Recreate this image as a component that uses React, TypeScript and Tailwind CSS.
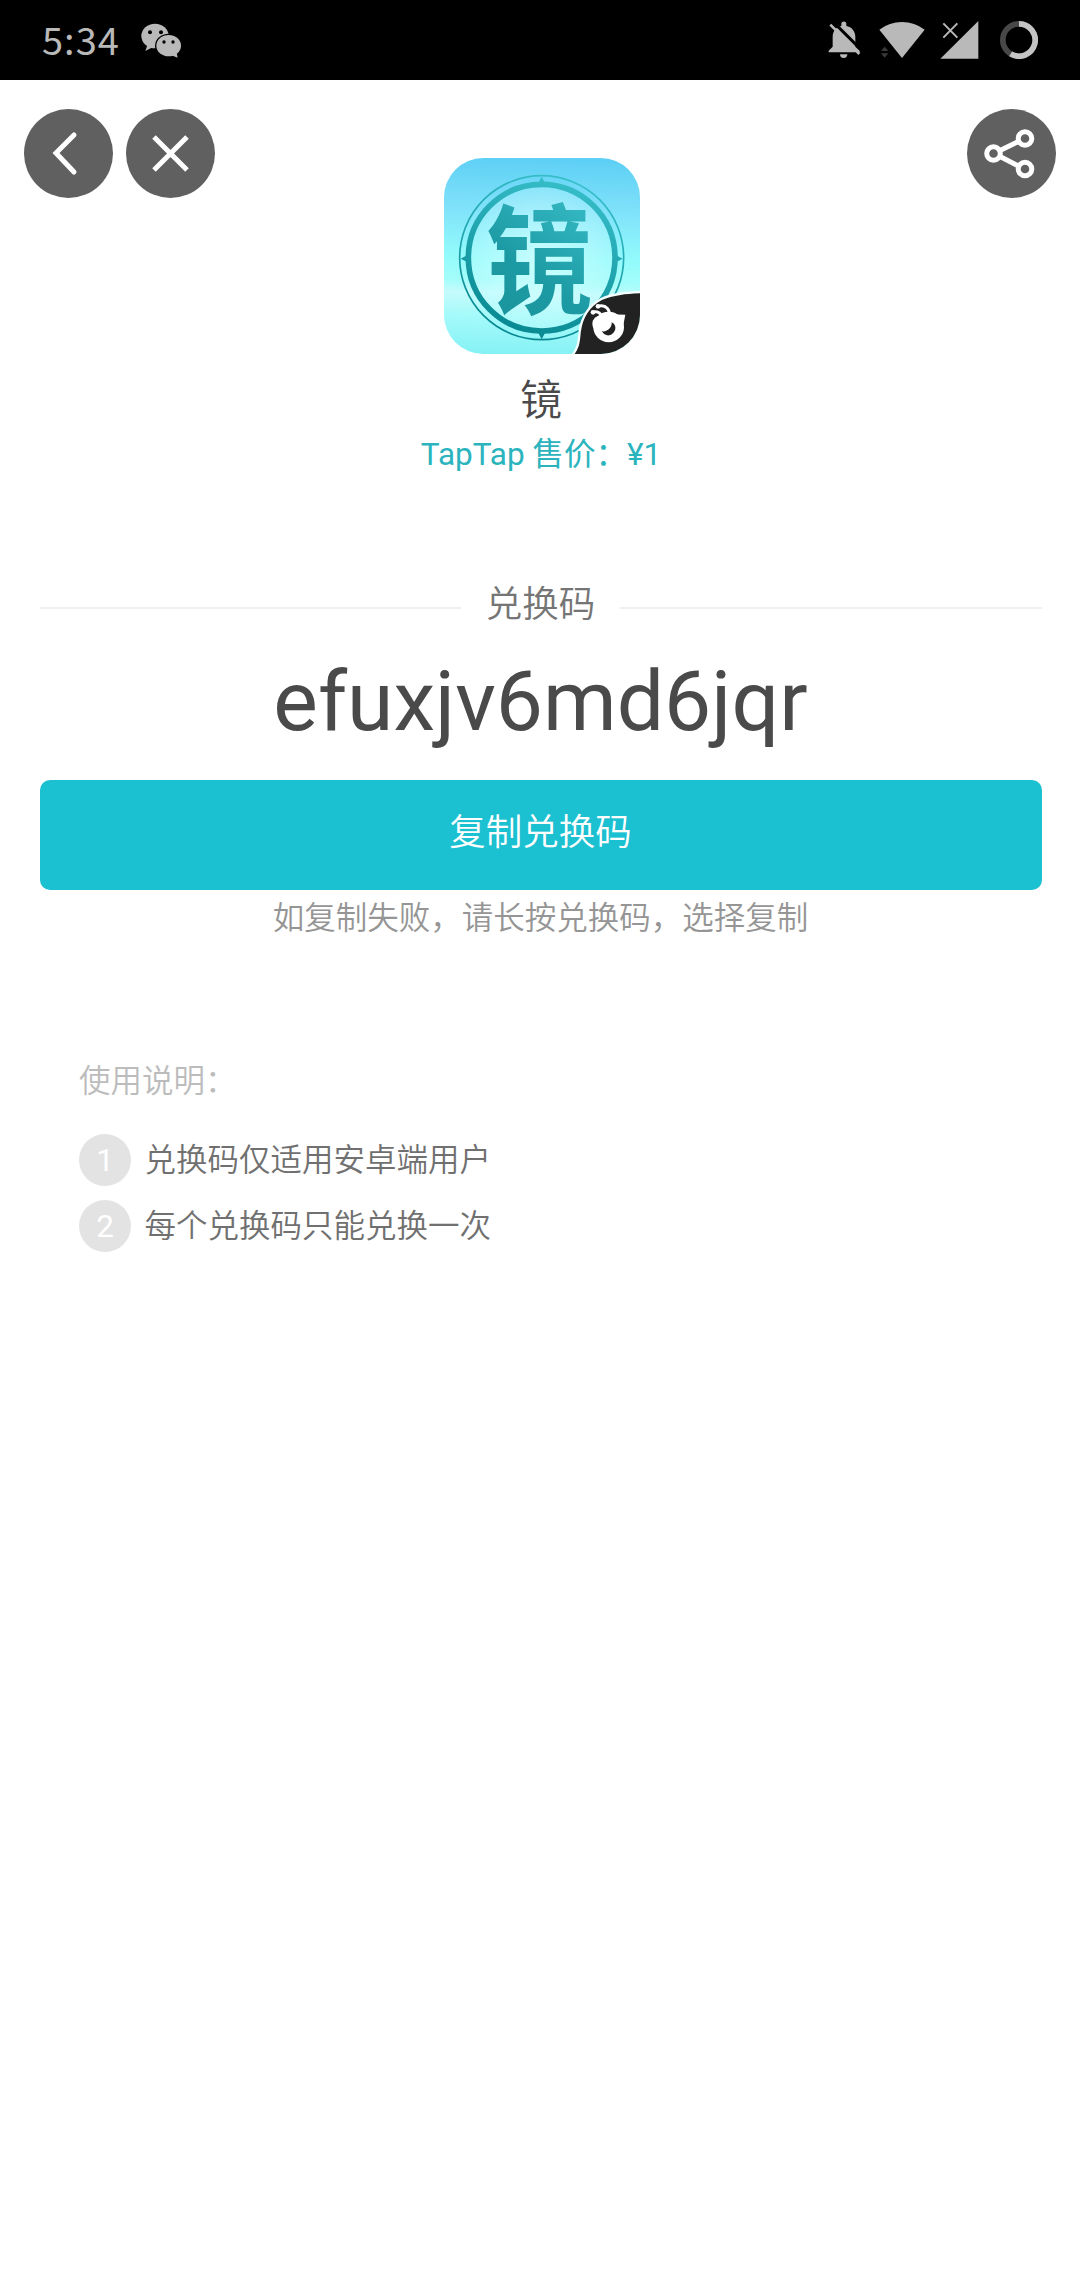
import React from 'react';

const instructions = [
    '兑换码仅适用安卓端用户',
    '每个兑换码只能兑换一次',
];

const WeChatIcon = () => (
    <svg className="w-[40px] h-[35px]" viewBox="423 67 120 105" fill="#b9b9b9">
        <path d="M442 134 L436 151 L458 140 Z" />
        <ellipse cx="465" cy="106" rx="41" ry="37" />
        <ellipse cx="506" cy="135" rx="41" ry="36" fill="#000" />
        <ellipse cx="506" cy="135" rx="37" ry="32" />
        <path d="M514 164 L533 171 L529 152 Z" />
        <g fill="#000">
            <circle cx="450" cy="95" r="6" />
            <circle cx="483" cy="95" r="6" />
            <circle cx="492" cy="124" r="5" />
            <circle cx="519" cy="124" r="5" />
        </g>
    </svg>
);

const BellOffIcon = () => (
    <svg className="w-[33px] h-[38px]" viewBox="83 64 99 114" fill="#b9b9b9">
        <path d="M85 158 V153 L97 141 V112 C97 94 107 82 123 79 V73 A7.5 7.5 0 0 1 138 73 V79 C154 82 165 94 165 112 V141 L178 153 V158 Z" />
        <path d="M119 164 H141 A11 11 0 0 1 119 164 Z" />
        <path d="M98 66 L192 160" stroke="#000" strokeWidth="9" />
        <path d="M90 75 L177 163" stroke="#b9b9b9" strokeWidth="8" />
    </svg>
);

const WifiIcon = () => (
    <svg className="w-[46px] h-[38px]" viewBox="239 63 138 114" fill="#b9b9b9">
        <path d="M240 89 Q270 66 308 66 Q346 66 376 89 L308 174 Z" />
        <path d="M245 153 L256 140 L267 153 Z M245 160 H267 L256 173 Z" fill="#3a3a3a" />
    </svg>
);

const SignalIcon = () => (
    <svg className="w-[39px] h-[38px]" viewBox="421 63 117 114">
        <path d="M536 63 V176 H422 Z" fill="#b9b9b9" />
        <path d="M431 70 L473 113 M473 70 L431 113" stroke="#b9b9b9" strokeWidth="6" />
    </svg>
);

const BatteryIcon = () => (
    <svg className="w-[38px] h-[38px]" viewBox="600 63 114 114" fill="none" strokeWidth="17">
        <circle cx="657" cy="120" r="48.5" stroke="#484848" />
        <path d="M657 71.5 A48.5 48.5 0 1 1 632 161.5" stroke="#c4c4c4" />
    </svg>
);

const GameLogo = () => (
    <svg className="ml-1 mt-[49px] w-[196px] h-[196px] shrink-0" viewBox="43 39 588 588">
        <defs>
            <linearGradient id="sky" x1="0.03" y1="0" x2="0" y2="1">
                <stop offset="0" stopColor="#5fd0f5" />
                <stop offset="0.25" stopColor="#80e2fa" />
                <stop offset="0.5" stopColor="#93fbfb" />
                <stop offset="0.62" stopColor="#a4fdfa" />
                <stop offset="0.68" stopColor="#c6fbfc" />
                <stop offset="0.8" stopColor="#a5fafa" />
                <stop offset="1" stopColor="#84f1f5" />
            </linearGradient>
            <linearGradient id="ink" gradientUnits="userSpaceOnUse" x1="430" y1="100" x2="270" y2="580">
                <stop offset="0" stopColor="#37bfca" />
                <stop offset="1" stopColor="#078891" />
            </linearGradient>
            <linearGradient id="glyph" x1="0.7" y1="0.1" x2="0.3" y2="1">
                <stop offset="0" stopColor="#35b9c4" />
                <stop offset="0.6" stopColor="#1c9aa3" />
                <stop offset="1" stopColor="#1a949c" />
            </linearGradient>
            <radialGradient id="shine">
                <stop offset="0" stopColor="#dcffff" stopOpacity="0.75" />
                <stop offset="1" stopColor="#c9fdff" stopOpacity="0.3" />
            </radialGradient>
            <clipPath id="tile">
                <rect x="43" y="39" width="588" height="588" rx="118" />
            </clipPath>
        </defs>
        <g clipPath="url(#tile)">
            <rect x="43" y="39" width="588" height="588" fill="url(#sky)" />
            <circle cx="336" cy="338" r="212" fill="url(#shine)" />
            <g fill="none" stroke="url(#ink)">
                <circle cx="336" cy="338" r="246" strokeWidth="5" />
                <circle cx="336" cy="338" r="220" strokeWidth="17" />
            </g>
            <path d="M336 95 L346 114 H326 Z M336 583 L346 564 H326 Z M93 341 L112 331 V351 Z M579 341 L560 331 V351 Z" fill="url(#ink)" />
            <text
                x="0"
                y="0"
                transform="translate(329 480) scale(1 1.13)"
                textAnchor="middle"
                fontSize="318"
                fill="url(#glyph)"
                className="font-['Noto_Sans_CJK_SC',sans-serif] font-bold"
            >
                镜
            </text>
            <path d="M424 636 C448 606 447 590 450 560 C456 515 478 482 515 462 C550 446 590 443 645 441 V645 H424 Z" fill="#222" stroke="#f5ffff" strokeWidth="7" />
            {/* bee mascot */}
            <circle cx="537" cy="546" r="46" fill="#fff" />
            <path d="M540 508 L587 509 L580 545 Z" fill="#fff" />
            <circle cx="514" cy="537" r="26" fill="#fff" />
            <path d="M517 559 C532 562 548 547 546 532 C565 541 558 567 539 571 C529 572 521 568 517 559 Z" fill="#222" />
            <path d="M517 525 C517 506 506 497 490 502 M537 521 C545 493 528 478 505 484" fill="none" stroke="#fff" strokeWidth="9" strokeLinecap="round" />
            <circle cx="490" cy="502" r="7" fill="#fff" />
            <circle cx="505" cy="484" r="7" fill="#fff" />
        </g>
    </svg>
);

const RoundButton: React.FC<{ label: string; children: React.ReactNode }> = ({ label, children }) => (
    <button aria-label={label} className="w-[89px] h-[89px] rounded-full bg-[#606060] shrink-0">
        <svg className="w-[89px] h-[89px]" viewBox="0 0 89 89" fill="none" stroke="#fff" strokeWidth="5">
            {children}
        </svg>
    </button>
);

const App: React.FC = () => {
    return (
        <main className="w-[1080px] h-[2280px] bg-white font-[Roboto,'Noto_Sans_CJK_SC',sans-serif] text-[31.5px] overflow-hidden">
            <div className="flex items-center justify-between h-20 bg-black px-[42px]">
                <div className="flex items-center gap-[21px]">
                    <span className="pb-[3px] font-['Noto_Sans_CJK_SC',sans-serif] text-[38px] leading-[40px] tracking-[1px] text-[#b9b9b9]">5:34</span>
                    <WeChatIcon />
                </div>
                <div className="flex items-center">
                    <BellOffIcon />
                    <div className="ml-[18px] mr-[15px]"><WifiIcon /></div>
                    <SignalIcon />
                    <div className="ml-[21px]"><BatteryIcon /></div>
                </div>
            </div>

            <header className="flex items-start px-6 pt-[29px]">
                <div className="flex flex-1 gap-[13px]">
                    <RoundButton label="返回">
                        <path d="M50 26 L32 44 L50 63" strokeLinecap="round" />
                    </RoundButton>
                    <RoundButton label="关闭">
                        <path d="M28 28 L61 61 M61 28 L28 61" />
                    </RoundButton>
                </div>
                <GameLogo />
                <div className="flex flex-1 justify-end">
                    <RoundButton label="分享">
                        <circle cx="26.5" cy="44.5" r="6.8" />
                        <circle cx="58" cy="29.5" r="6.8" />
                        <circle cx="58" cy="60" r="6.8" />
                        <path d="M33 41.5 L51.5 32.5 M33 47.5 L51.5 57" />
                    </RoundButton>
                </div>
            </header>

            <section className="pl-0.5 text-center">
                <h1 className="mt-5 text-[42px] leading-[54px] font-[350] text-[#4a4a4a]">镜</h1>
                <p className="mt-[3px] leading-[48px] text-[#2bb4bd]">TapTap 售价：¥1</p>
            </section>

            <section className="mt-[102px] pl-[39.5px] pr-[38.5px] text-center">
                <div className="flex items-center gap-[25px]">
                    <div className="mt-[5px] h-[2px] flex-1 bg-[#efefef]" />
                    <h2 className="text-[36.5px] leading-[48px] font-[350] text-[#757575]">兑换码</h2>
                    <div className="mt-[5px] h-[2px] flex-1 bg-[#efefef]" />
                </div>
                <p className="mt-[18px] text-[84px] leading-[110px] text-[#4a4a4a]">efuxjv6md6jqr</p>
                <button className="mt-[23px] block w-full h-[110px] rounded-[10px] bg-[#1bc0d1] pb-1 text-[36.5px] font-[350] text-white">复制兑换码</button>
                <p className="mt-[5px] leading-[48px] font-[350] text-[#959595]">如复制失败，请长按兑换码，选择复制</p>
            </section>

            <section className="mt-[115px] px-[79px]">
                <h3 className="leading-[48px] font-[350] text-[#bcbcbc]">使用说明：</h3>
                <ol className="mt-7 flex flex-col gap-[13.5px]">
                    {instructions.map((item, index) => (
                        <li key={index} className="flex items-center gap-[13.5px] text-[#707070]">
                            <span className="w-[52px] h-[52px] rounded-full bg-[#e3e3e3] text-center leading-[53px] text-white">{index + 1}</span>
                            <span className="pt-0.5 leading-[50px] font-[350]">{item}</span>
                        </li>
                    ))}
                </ol>
            </section>
        </main>
    );
};

export default App;
